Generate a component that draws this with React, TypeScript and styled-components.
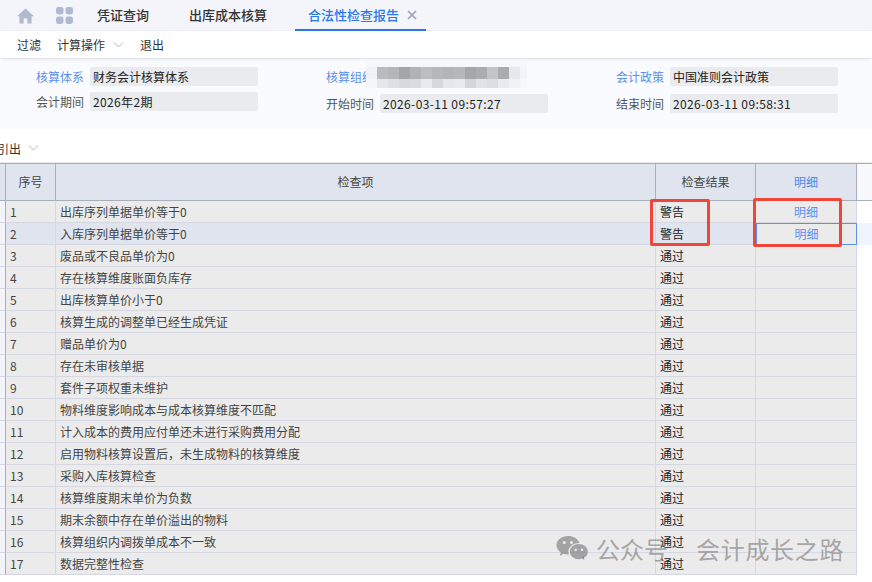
import React from "react";
import styled, { createGlobalStyle } from "styled-components";

const Global = createGlobalStyle`
  html, body { margin: 0; padding: 0; background: #fff; overflow: hidden; }
  body { font-family: "Noto Sans CJK SC", "Noto Sans", sans-serif; font-size: 12px; color: #333; }
  * { box-sizing: border-box; }
`;

const Page = styled.div`
  position: relative;
  width: 872px;
  height: 582px;
  overflow: hidden;
  background: #fff;
  display: flex;
  flex-direction: column;
`;

const TabBar = styled.div`
  height: 31px;
  background: #f3f5fa;
  display: flex;
  align-items: stretch;
  padding-left: 17px;
`;
const IconSlot = styled.div<{ $w: number }>`
  width: ${(p) => p.$w}px;
  display: flex;
  align-items: center;
`;
const Tab = styled.div<{ $active?: boolean; $w: number }>`
  width: ${(p) => p.$w}px;
  display: flex;
  align-items: center;
  justify-content: ${(p) => (p.$active ? "flex-start" : "center")};
  padding-left: ${(p) => (p.$active ? 13 : 0)}px;
  gap: 8px;
  font-size: 13px;
  font-weight: 500;
  line-height: 30px;
  color: ${(p) => (p.$active ? "#2a78f0" : "#333")};
  border-bottom: 2px solid ${(p) => (p.$active ? "#2a78f0" : "transparent")};
`;

const Toolbar = styled.div`
  height: 27px;
  background: #fff;
  display: flex;
  align-items: center;
  padding-left: 17px;
  gap: 16px;
  box-shadow: 0 1px 3px rgba(0, 0, 0, 0.12);
  position: relative;
  z-index: 1;
`;
const ToolItem = styled.span`
  display: inline-flex;
  align-items: center;
  gap: 8px;
  font-size: 12px;
  color: #333;
`;

const FormArea = styled.div`
  height: 71px;
  background: #fafbff;
  padding-top: 9px;
  display: grid;
  grid-template-columns: 290px 290px 292px;
`;
const FormColumn = styled.div<{ $gap: number }>`
  display: flex;
  flex-direction: column;
  gap: ${(p) => p.$gap}px;
`;
const Field = styled.div`
  display: flex;
  align-items: center;
  height: 19px;
`;
const Label = styled.span<{ $blue?: boolean }>`
  width: 84px;
  text-align: right;
  font-size: 12px;
  color: ${(p) => (p.$blue ? "#5b8ff0" : "#555")};
  white-space: nowrap;
  flex: none;
`;
const Value = styled.div<{ $latin?: boolean }>`
  width: 168px;
  height: 19px;
  margin-left: 6px;
  background: #e9ebef;
  border-radius: 2px;
  padding-left: 3px;
  line-height: 19px;
  font-size: 12px;
  letter-spacing: ${(p) => (p.$latin ? "0.37px" : "0")};
  color: #222;
  white-space: nowrap;
`;
const Mosaic = styled.svg`
  margin-left: -8px;
  margin-top: -3px;
  flex: none;
  position: relative;
`;

const ExportRow = styled.div`
  height: 34px;
  background: #fff;
  display: flex;
  align-items: center;
  padding-top: 4px;
  margin-left: -3px;
  gap: 7px;
  font-size: 12px;
  color: #333;
`;

const Table = styled.div`
  border-top: 1px solid #a9aebb;
  box-shadow: 0 -1px 0 #e9e9ec;
  background: #fff;
`;
const HeadRow = styled.div`
  display: grid;
  grid-template-columns: 6px 50px 600px 100px 101px 15px;
  height: 37px;
  background: #e0e4ef;
  border-bottom: 1px solid #a9aebb;
`;
const HeadCell = styled.div<{ $blue?: boolean; $blank?: boolean }>`
  border-right: 1px solid ${(p) => (p.$blank ? "transparent" : "#a9aebb")};
  padding-bottom: 2px;
  display: flex;
  align-items: center;
  justify-content: center;
  font-size: 12px;
  color: ${(p) => (p.$blue ? "#4f86ee" : "#444")};
  background: ${(p) => (p.$blank ? "#f7f8fc" : "transparent")};
`;
const Row = styled.div<{ $selected?: boolean }>`
  display: grid;
  grid-template-columns: 6px 50px 600px 100px 101px 15px;
  height: 22px;
  background: ${(p) => (p.$selected ? "#e0e4ef" : "#ebebeb")};
`;
const Cell = styled.div<{ $center?: boolean; $blue?: boolean }>`
  border-right: 1px solid #d5d8e2;
  border-bottom: 1px solid #d5d8e2;
  padding-left: ${(p) => (p.$center ? 0 : 4)}px;
  display: flex;
  align-items: center;
  justify-content: ${(p) => (p.$center ? "center" : "flex-start")};
  font-size: 12px;
  white-space: nowrap;
  color: ${(p) => (p.$blue ? "#5b8ff0" : "#444")};
`;
const FocusCell = styled(Cell)`
  background: #ebebeb;
  border: 1px solid #5b8ff0;
  padding-bottom: 2px;
`;
const Gutter = styled.div`
  background: #f3f4fa;
  border-right: 1px solid #a9aebb;
  border-bottom: 1px solid #d5d8e2;
`;
const Tail = styled.div<{ $selected?: boolean }>`
  background: ${(p) => (p.$selected ? "#f0f4ff" : "#fff")};
`;
const ResultText = styled.span`
  color: #222;
`;

const Highlight = styled.div<{ $x: number; $y: number; $w: number; $h: number }>`
  position: absolute;
  left: ${(p) => p.$x}px;
  top: ${(p) => p.$y}px;
  width: ${(p) => p.$w}px;
  height: ${(p) => p.$h}px;
  border: 3px solid #f0453a;
  border-radius: 2px;
`;

const Watermark = styled.div`
  position: absolute;
  left: 556px;
  top: 532px;
  height: 32px;
  display: flex;
  align-items: center;
  color: rgba(120, 120, 120, 0.62);
  font-size: 24px;
  white-space: nowrap;
`;
const WmText = styled.span<{ $gap: number; $spacing: number }>`
  margin-left: ${(p) => p.$gap}px;
  letter-spacing: ${(p) => p.$spacing}px;
`;

const HomeIcon = () => (
  <svg width="17" height="16" viewBox="0 0 17 16">
    <path d="M8.5 0.5 L17 8.2 H14.6 V15.5 H10.4 V10.4 H6.6 V15.5 H2.4 V8.2 H0 Z" fill="#b0b9cf" />
  </svg>
);
const GridIcon = () => (
  <svg width="17" height="17" viewBox="0 0 17 17" fill="#b0b9cf">
    <rect x="0" y="0" width="7.5" height="7.5" rx="2.4" />
    <rect x="9.5" y="0" width="7.5" height="7.5" rx="2.4" />
    <rect x="0" y="9.5" width="7.5" height="7.5" rx="2.4" />
    <rect x="9.5" y="9.5" width="7.5" height="7.5" rx="2.4" />
  </svg>
);
const CloseIcon = () => (
  <svg width="10" height="10" viewBox="0 0 10 10">
    <path d="M1 1 L9 9 M9 1 L1 9" stroke="#9aa3b5" strokeWidth="1.7" />
  </svg>
);
const Chevron = () => (
  <svg width="11" height="6" viewBox="0 0 11 6">
    <path d="M1 0.5 L5.500 5 L10 0.5" fill="none" stroke="#b3b9c6" strokeWidth="1" />
  </svg>
);
const WeChat = () => (
  <svg width="32" height="26" viewBox="0 0 32 26" fill="rgba(120,120,120,0.62)">
    <path d="M12 1C5.600 1 .5 5.100 .5 10.200c0 2.900 1.700 5.500 4.300 7.200L3.700 21l4.100-2.200c1.300.4 2.700.6 4.200.6h.8a9 9 0 0 1-.4-2.600c0-5 4.700-8.900 10.500-8.900h.7C21.500 3.700 17.100 1 12 1z" />
    <ellipse cx="22.800" cy="16.700" rx="9" ry="7.600" />
    <path d="M26 22.500l2.200 3-.3-4.500z" />
    <circle cx="8.200" cy="7.600" r="1.500" fill="#ececec" />
    <circle cx="15.500" cy="7.600" r="1.500" fill="#ececec" />
    <circle cx="19.800" cy="14.800" r="1.200" fill="#ececec" />
    <circle cx="26" cy="14.800" r="1.200" fill="#ececec" />
  </svg>
);

const mosaicTop = ["#f0f2f7", "#b9bbc0", "#b4b6ba", "#a4a5a9", "#b0b2b6", "#bbbdc2", "#b5b7bb", "#b2b4b8", "#b5b7bb", "#a5a6aa", "#abadb1", "#c2c4c8", "#a9abaf", "#e6e8ee", "#f2f4f9"];
const mosaicBottom = ["#f4f6fa", "#e6e7ec", "#dfe0e5", "#d8d9de", "#dadbe0", "#e9eaef", "#d7d8dd", "#e6e7ec", "#e9eaef", "#d5d6db", "#e2e3e8", "#dcdde2", "#eaebf0", "#f0f2f7", "#f5f7fb"];

const BlurBlock = () => (
  <Mosaic width="161" height="26" viewBox="0 0 161 26" shapeRendering="crispEdges">
    <rect x={0} y={0} width={161} height={5} fill="#f5f7fb" />
    {mosaicTop.map((c, i) => (
      <rect key={`t${i}`} x={i * 11} y={5} width={11} height={12} fill={c} />
    ))}
    {mosaicBottom.map((c, i) => (
      <rect key={`b${i}`} x={i * 11} y={17} width={11} height={9} fill={c} />
    ))}
  </Mosaic>
);

const items = [
  "出库序列单据单价等于0",
  "入库序列单据单价等于0",
  "废品或不良品单价为0",
  "存在核算维度账面负库存",
  "出库核算单价小于0",
  "核算生成的调整单已经生成凭证",
  "赠品单价为0",
  "存在未审核单据",
  "套件子项权重未维护",
  "物料维度影响成本与成本核算维度不匹配",
  "计入成本的费用应付单还未进行采购费用分配",
  "启用物料核算设置后，未生成物料的核算维度",
  "采购入库核算检查",
  "核算维度期末单价为负数",
  "期末余额中存在单价溢出的物料",
  "核算组织内调拨单成本不一致",
  "数据完整性检查",
];

export default function App() {
  return (
    <Page>
      <Global />
      <TabBar>
        <IconSlot $w={39}><HomeIcon /></IconSlot>
        <IconSlot $w={29}><GridIcon /></IconSlot>
        <Tab $w={76}>凭证查询</Tab>
        <Tab $w={134}>出库成本核算</Tab>
        <Tab $active $w={131}>合法性检查报告<CloseIcon /></Tab>
      </TabBar>
      <Toolbar>
        <ToolItem>过滤</ToolItem>
        <ToolItem>计算操作<Chevron /></ToolItem>
        <ToolItem>退出</ToolItem>
      </Toolbar>
      <FormArea>
        <FormColumn $gap={6}>
          <Field><Label $blue>核算体系</Label><Value>财务会计核算体系</Value></Field>
          <Field><Label>会计期间</Label><Value $latin>2026年2期</Value></Field>
        </FormColumn>
        <FormColumn $gap={8}>
          <Field><Label $blue>核算组织</Label><BlurBlock /></Field>
          <Field><Label>开始时间</Label><Value $latin>2026-03-11 09:57:27</Value></Field>
        </FormColumn>
        <FormColumn $gap={8}>
          <Field><Label $blue>会计政策</Label><Value>中国准则会计政策</Value></Field>
          <Field><Label>结束时间</Label><Value $latin>2026-03-11 09:58:31</Value></Field>
        </FormColumn>
      </FormArea>
      <ExportRow>引出<Chevron /></ExportRow>
      <Table>
        <HeadRow>
          <HeadCell />
          <HeadCell>序号</HeadCell>
          <HeadCell>检查项</HeadCell>
          <HeadCell>检查结果</HeadCell>
          <HeadCell $blue>明细</HeadCell>
          <HeadCell $blank />
        </HeadRow>
        {items.map((text, i) => {
          const warn = i < 2;
          const selected = i === 1;
          return (
            <Row key={text} $selected={selected}>
              <Gutter />
              <Cell>{i + 1}</Cell>
              <Cell>{text}</Cell>
              <Cell><ResultText>{warn ? "警告" : "通过"}</ResultText></Cell>
              {selected ? (
                <FocusCell $center $blue>明细</FocusCell>
              ) : (
                <Cell $center $blue>{warn ? "明细" : ""}</Cell>
              )}
              <Tail $selected={selected} />
            </Row>
          );
        })}
      </Table>
      <Highlight $x={650} $y={199} $w={60} $h={47} />
      <Highlight $x={753} $y={198} $w={89} $h={49} />
      <Watermark>
        <WeChat />
        <WmText $gap={8} $spacing={0}>公众号</WmText>
        <WmText $gap={28} $spacing={0.7}>会计成长之路</WmText>
      </Watermark>
    </Page>
  );
}
